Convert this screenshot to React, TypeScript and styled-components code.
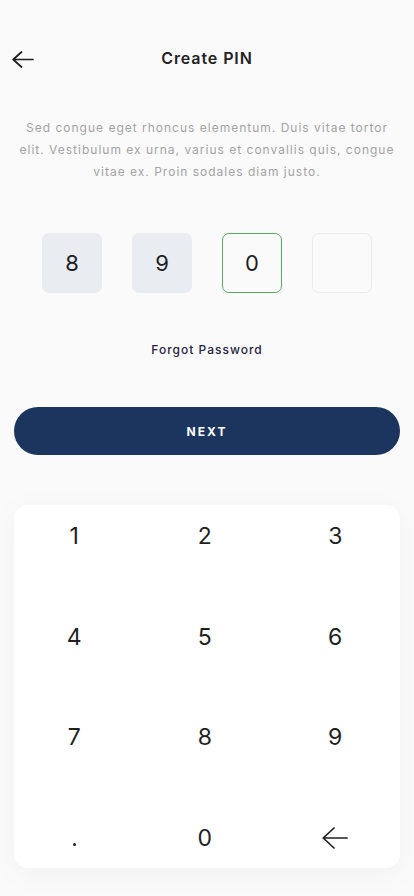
import styled, { createGlobalStyle } from "styled-components";

const GlobalStyle = createGlobalStyle`
  * { box-sizing: border-box; }
  body {
    margin: 0;
    background: #fafafa;
    font-family: Inter, "Noto Sans", sans-serif;
    color: #1f1f1f;
  }
`;

const Page = styled.div`
  width: 414px;
  min-height: 896px;
  padding: 40px 14px 0;
  display: flex;
  flex-direction: column;
`;

const Header = styled.div`
  position: relative;
  height: 36px;
  display: flex;
  align-items: center;
  justify-content: center;
`;

const BackButton = styled.button`
  position: absolute;
  left: -2px;
  top: 11px;
  background: none;
  border: none;
  padding: 0;
  width: 22px;
  height: 17px;
  display: flex;
  color: #1f1f1f;
  cursor: pointer;
`;

const Title = styled.h1`
  margin: 0;
  font-size: 16px;
  font-weight: 600;
  letter-spacing: 0.9px;
  line-height: 36px;
  color: #222;
`;

const Description = styled.p`
  margin: 41px 0 0;
  padding: 0 2px;
  text-align: center;
  font-size: 12px;
  line-height: 22px;
  letter-spacing: 1px;
  color: #a3a3a3;
`;

const PinRow = styled.div`
  margin-top: 50px;
  display: flex;
  justify-content: center;
  gap: 30px;
`;

const PinBox = styled.div<{ $state: "filled" | "active" | "empty" }>`
  width: 60px;
  height: 60px;
  border-radius: 7px;
  display: flex;
  align-items: center;
  justify-content: center;
  font-size: 22px;
  color: #1f1f1f;
  background: ${p => (p.$state === "filled" ? "#e9ecf1" : "transparent")};
  border: 1px solid
    ${p =>
      p.$state === "active" ? "#5aaa5e" : p.$state === "empty" ? "#ebebeb" : "#e9ecf1"};
`;

const Forgot = styled.a`
  margin-top: 49px;
  align-self: center;
  font-size: 12px;
  line-height: 16px;
  letter-spacing: 1px;
  font-weight: 500;
  color: #26223f;
  cursor: pointer;
`;

const NextButton = styled.button`
  margin-top: 49px;
  height: 48px;
  width: 100%;
  border: none;
  border-radius: 24px;
  background: #1c355e;
  color: #fff;
  font-family: Inter, "Noto Sans", sans-serif;
  font-size: 12px;
  font-weight: 700;
  letter-spacing: 2px;
  cursor: pointer;
`;

const Keypad = styled.div`
  margin-top: 50px;
  background: #fff;
  border-radius: 14px;
  box-shadow: 0 6px 30px rgba(0, 0, 0, 0.04);
  padding: 16px 0 15px;
`;

const KeyGrid = styled.div`
  margin-left: -5px;
  display: grid;
  grid-template-columns: repeat(3, 130.5px);
  row-gap: 70.5px;
`;

const Key = styled.button`
  height: 30px;
  background: none;
  border: none;
  padding: 0;
  display: flex;
  align-items: center;
  justify-content: center;
  font-family: Inter, "Noto Sans", sans-serif;
  font-size: 23px;
  color: #1f1f1f;
  cursor: pointer;
`;

const Dot = styled.span`
  width: 3px;
  height: 3px;
  margin-top: 14px;
  border-radius: 50%;
  background: #1f1f1f;
`;

const Arrow = ({ w, h }: { w: number; h: number }) => (
  <svg width={w} height={h} viewBox={`0 0 ${w} ${h}`} fill="none">
    <path
      d={`M${w - 1} ${h / 2}H1.5M${h / 2 + 1} 1L1.2 ${h / 2}L${h / 2 + 1} ${h - 1}`}
      stroke="currentColor"
      strokeWidth="1.7"
      strokeLinecap="round"
      strokeLinejoin="round"
    />
  </svg>
);

const pins: { value: string; state: "filled" | "active" | "empty" }[] = [
  { value: "8", state: "filled" },
  { value: "9", state: "filled" },
  { value: "0", state: "active" },
  { value: "", state: "empty" },
];

export default function App() {
  const keys = ["1", "2", "3", "4", "5", "6", "7", "8", "9"];
  return (
    <>
      <GlobalStyle />
      <Page>
        <Header>
          <BackButton aria-label="Back">
            <Arrow w={22} h={17} />
          </BackButton>
          <Title>Create PIN</Title>
        </Header>
        <Description>
          Sed congue eget rhoncus elementum. Duis vitae tortor elit. Vestibulum ex urna, varius et
          convallis quis, congue vitae ex. Proin sodales diam justo.
        </Description>
        <PinRow>
          {pins.map((p, i) => (
            <PinBox key={i} $state={p.state}>
              {p.value}
            </PinBox>
          ))}
        </PinRow>
        <Forgot>Forgot Password</Forgot>
        <NextButton>NEXT</NextButton>
        <Keypad>
          <KeyGrid>
            {keys.map(k => (
              <Key key={k}>{k}</Key>
            ))}
            <Key aria-label="dot">
              <Dot />
            </Key>
            <Key>0</Key>
            <Key aria-label="delete">
              <Arrow w={26} h={22} />
            </Key>
          </KeyGrid>
        </Keypad>
      </Page>
    </>
  );
}
